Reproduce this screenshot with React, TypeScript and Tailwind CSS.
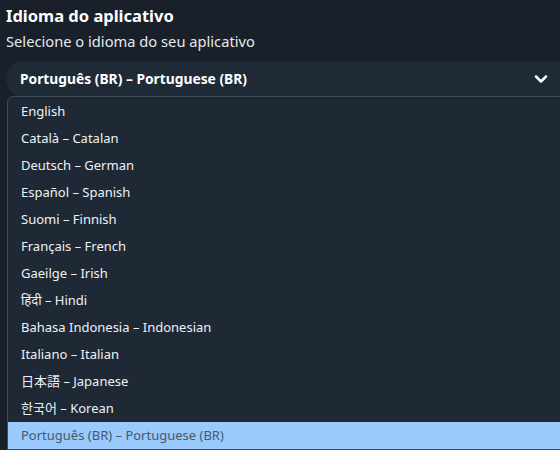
import { ChevronDown } from 'lucide-react'

const LANGUAGES = [
  'English',
  'Català – Catalan',
  'Deutsch – German',
  'Español – Spanish',
  'Suomi – Finnish',
  'Français – French',
  'Gaeilge – Irish',
  'हिंदी – Hindi',
  'Bahasa Indonesia – Indonesian',
  'Italiano – Italian',
  '日本語 – Japanese',
  '한국어 – Korean',
  'Português (BR) – Portuguese (BR)',
]

const SELECTED = 'Português (BR) – Portuguese (BR)'

export default function App() {
  return (
    <div
      className="h-[450px] w-[560px] overflow-hidden bg-[#19202a] text-white"
      style={{ fontFamily: '"Noto Sans", "Noto Sans CJK JP", "Noto Sans CJK KR", sans-serif' }}
    >
      <div className="pl-1.5 pt-[4px]">
        <h1 className="text-[16.5px] font-bold leading-[24px]">Idioma do aplicativo</h1>
        <p className="mt-[2px] text-[14.7px] leading-[22px] text-[#e6e9ee]">Selecione o idioma do seu aplicativo</p>

        {/* Select */}
        <div className="relative mt-[9px]">
          <div className="flex h-[36px] items-center justify-between rounded-l-[18px] bg-[#1f2a37] pl-[14px] pr-[9px]">
            <span className="text-[13.8px] font-bold">{SELECTED}</span>
            <ChevronDown size={20} strokeWidth={3} className="text-white" />
          </div>

          {/* Listbox */}
          <ul className="absolute left-px top-[35px] w-[560px] rounded-tl-[6px] border border-[#414b57] bg-[#1f2935] pt-px text-[13px]">
            {LANGUAGES.map((lang) => (
              <li
                key={lang}
                className={
                  lang === SELECTED
                    ? 'flex h-[27px] items-center bg-[#99c9fd] pl-[13px] text-[#4b5866]'
                    : 'flex h-[27px] items-center pl-[13px] text-[#eef1f4]'
                }
              >
                {lang}
              </li>
            ))}
          </ul>
        </div>
      </div>
    </div>
  )
}
